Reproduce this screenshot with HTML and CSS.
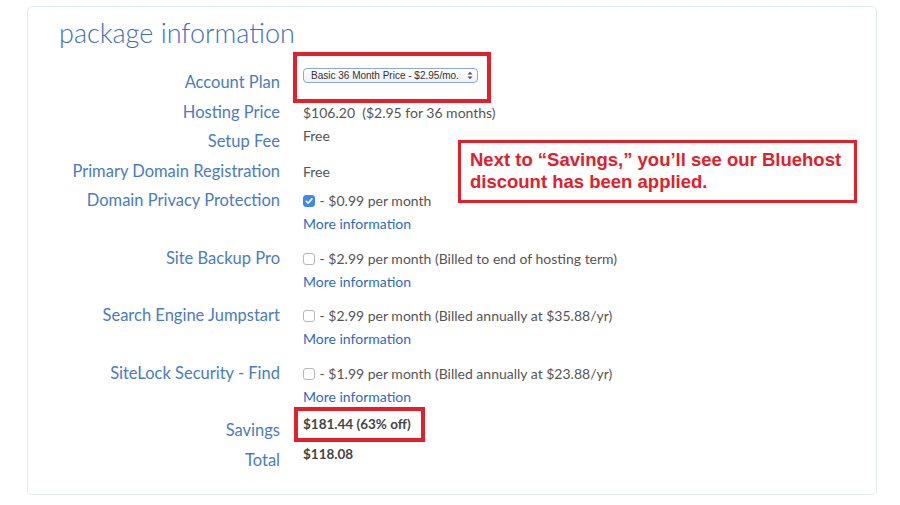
FILE: index.html
```html
<!DOCTYPE html>
<html lang="en">
<head>
  <meta charset="UTF-8">
  <meta name="viewport" content="width=device-width, initial-scale=1.0">
  <title>Package Information</title>
  <link rel="stylesheet" href="styles.css">
</head>
<body>
  <div class="card">
    <h2 class="title">package information</h2>

    <div class="rows">
      <div class="row">
        <div class="label">Account Plan</div>
        <div class="value value-select">
          <span class="marked marked-select">
            <span class="select">Basic 36 Month Price - $2.95/mo.
              <svg class="arrows" width="6" height="9" viewBox="0 0 6 9"><path d="M0.5 3.5 L3 0.8 L5.5 3.5 Z M0.5 5.5 L3 8.2 L5.5 5.5 Z" fill="#555"/></svg>
            </span>
          </span>
        </div>
      </div>

      <div class="row">
        <div class="label">Hosting Price</div>
        <div class="value">$106.20&nbsp; ($2.95 for 36 months)</div>
      </div>

      <div class="row">
        <div class="label">Setup Fee</div>
        <div class="value value-raised">Free</div>
      </div>

      <div class="row">
        <div class="label">Primary Domain Registration</div>
        <div class="value">Free</div>
      </div>

      <div class="row row-multi">
        <div class="label">Domain Privacy Protection</div>
        <div class="value">
          <div><span class="check checked"><svg width="12" height="12" viewBox="0 0 12 12"><path d="M3.2 6.2 L5.1 8.1 L8.9 3.9" fill="none" stroke="#fff" stroke-width="1.6" stroke-linecap="round" stroke-linejoin="round"/></svg></span> - $0.99 per month</div>
          <a class="more" href="#">More information</a>
        </div>
      </div>

      <div class="row row-multi">
        <div class="label">Site Backup Pro</div>
        <div class="value">
          <div><span class="check"></span> - $2.99 per month (Billed to end of hosting term)</div>
          <a class="more" href="#">More information</a>
        </div>
      </div>

      <div class="row row-multi">
        <div class="label">Search Engine Jumpstart</div>
        <div class="value">
          <div><span class="check"></span> - $2.99 per month (Billed annually at $35.88/yr)</div>
          <a class="more" href="#">More information</a>
        </div>
      </div>

      <div class="row row-multi">
        <div class="label">SiteLock Security - Find</div>
        <div class="value">
          <div><span class="check"></span> - $1.99 per month (Billed annually at $23.88/yr)</div>
          <a class="more" href="#">More information</a>
        </div>
      </div>

      <div class="row">
        <div class="label">Savings</div>
        <div class="value value-raised value-strong"><span class="marked marked-savings">$181.44 (63% off)</span></div>
      </div>

      <div class="row">
        <div class="label">Total</div>
        <div class="value value-raised value-strong">$118.08</div>
      </div>
    </div>

    <div class="callout">Next to “Savings,” you’ll see our Bluehost<br>discount has been applied.</div>
  </div>
</body>
</html>
```

FILE: styles.css
```css
body {
  margin: 0;
  padding: 0;
  background-color: #fff;
  font-family: Lato, "Open Sans", sans-serif;
}

.card {
  position: relative;
  width: 850px;
  height: 489px;
  box-sizing: border-box;
  margin: 6px 0 0 27px;
  border: 1px solid #e3e9f1;
  border-radius: 5px;
}

.title {
  margin: 9px 0 0 31px;
  font-size: 27px;
  font-weight: 300;
  line-height: 34px;
  color: #3f70bb;
}

.rows {
  margin-top: 18px;
}

.row {
  display: grid;
  grid-template-columns: 252px 1fr;
  column-gap: 23px;
  align-items: start;
}

.label {
  text-align: right;
  font-size: 16.5px;
  font-weight: 400;
  line-height: 29.5px;
  color: #4a7cc0;
}

.value {
  padding-top: 3px;
  font-size: 14px;
  line-height: 23px;
  color: #555;
}

.row-multi .value {
  padding-bottom: 8.5px;
}

.value-raised {
  padding-top: 0;
  margin-top: -3px;
}

.value-strong {
  color: #444;
  font-weight: 700;
  font-size: 13.5px;
}

.value-select {
  padding-top: 0;
}

.select {
  display: inline-flex;
  align-items: center;
  justify-content: space-between;
  width: 175px;
  height: 15px;
  box-sizing: border-box;
  padding: 0 4px 0 7px;
  border: 1px solid #8da8cc;
  border-radius: 4px;
  background: linear-gradient(#ffffff, #eef1f6);
  font-family: "Liberation Sans", Arial, sans-serif;
  font-size: 10px;
  line-height: 13px;
  color: #333;
  vertical-align: top;
}

.marked {
  position: relative;
  display: inline-block;
}

.marked::before {
  content: "";
  position: absolute;
  border: 4px solid #e2202b;
}

.marked-select::before {
  top: -16px;
  bottom: -12px;
  left: -10px;
  right: -13px;
}

.marked-savings::before {
  top: -6px;
  bottom: -6px;
  left: -9px;
  right: -14px;
}

.check {
  display: inline-block;
  width: 12px;
  height: 12px;
  box-sizing: border-box;
  border: 1px solid #b8b8b8;
  border-radius: 3px;
  background: #fff;
  vertical-align: -1px;
  margin-right: 1px;
}

.check svg {
  display: block;
  margin: -1px;
}

.check.checked {
  border-color: #3d87ee;
  background: #3d87ee;
}

.more {
  display: block;
  color: #2f6ac3;
  text-decoration: none;
}

.callout {
  position: absolute;
  left: 430px;
  top: 133px;
  width: 399px;
  height: 63px;
  box-sizing: border-box;
  padding: 6px 0 0 9px;
  border: 3px solid #e2202b;
  font-family: "Liberation Sans", Arial, sans-serif;
  font-size: 18.5px;
  font-weight: 700;
  line-height: 22px;
  color: #e2202b;
}
```
